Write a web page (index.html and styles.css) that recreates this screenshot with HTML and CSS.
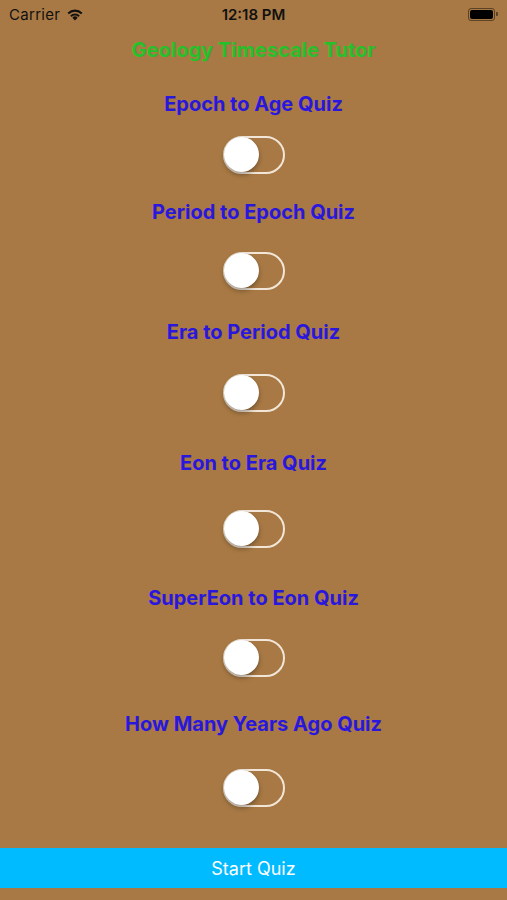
FILE: index.html
```html
<!DOCTYPE html>
<html lang="en">
<head>
  <meta charset="UTF-8">
  <title>Geology Timescale Tutor</title>
  <link rel="stylesheet" href="styles.css">
</head>
<body>
  <div class="status-bar">
    <div class="carrier">
      Carrier
      <svg class="wifi" width="18" height="13" viewBox="0 0 16 12">
        <path d="M8 11.5 L5.6 8.9 A3.4 3.4 0 0 1 10.4 8.9 Z" fill="#111"/>
        <path d="M3.6 6.9 A6.2 6.2 0 0 1 12.4 6.9 L11.1 8.3 A4.4 4.4 0 0 0 4.9 8.3 Z" fill="#111"/>
        <path d="M1.1 4.3 A9.8 9.8 0 0 1 14.9 4.3 L13.6 5.7 A7.9 7.9 0 0 0 2.4 5.7 Z" fill="#111"/>
      </svg>
    </div>
    <div class="clock">12:18 PM</div>
    <div class="battery">
      <div class="battery-body"><div class="battery-fill"></div></div>
      <div class="battery-tip"></div>
    </div>
  </div>

  <h1 class="app-title">Geology Timescale Tutor</h1>

  <div class="quiz-list">
    <div class="quiz-label">Epoch to Age Quiz</div>
    <div class="switch"><div class="knob"></div></div>
    <div class="quiz-label">Period to Epoch Quiz</div>
    <div class="switch"><div class="knob"></div></div>
    <div class="quiz-label">Era to Period Quiz</div>
    <div class="switch"><div class="knob"></div></div>
    <div class="quiz-label">Eon to Era Quiz</div>
    <div class="switch"><div class="knob"></div></div>
    <div class="quiz-label">SuperEon to Eon Quiz</div>
    <div class="switch"><div class="knob"></div></div>
    <div class="quiz-label">How Many Years Ago Quiz</div>
    <div class="switch"><div class="knob"></div></div>
  </div>

  <button class="start-btn" type="button">Start Quiz</button>
</body>
</html>
```

FILE: styles.css
```css
body {
  margin: 0;
  width: 507px;
  height: 900px;
  background-color: #a87944;
  font-family: Inter, "Noto Sans", sans-serif;
  overflow: hidden;
}

.status-bar {
  height: 28px;
  display: flex;
  align-items: center;
  justify-content: space-between;
  padding: 0 9px;
  position: relative;
  font-size: 15px;
  color: #111;
}

.carrier {
  display: flex;
  align-items: center;
  gap: 6px;
  letter-spacing: 0.3px;
}

.clock {
  position: absolute;
  left: 0;
  right: 0;
  text-align: center;
  font-weight: 600;
}

.battery {
  display: flex;
  align-items: center;
  gap: 1px;
}

.battery-body {
  width: 27px;
  height: 13px;
  border: 1px solid rgba(0, 0, 0, 0.45);
  border-radius: 3px;
  padding: 1px;
  box-sizing: border-box;
}

.battery-fill {
  width: 100%;
  height: 100%;
  background: #000;
  border-radius: 2px;
}

.battery-tip {
  width: 2px;
  height: 4px;
  background: rgba(0, 0, 0, 0.45);
  border-radius: 0 1px 1px 0;
}

.app-title {
  margin: 9px 0 0;
  text-align: center;
  font-size: 20px;
  line-height: 26px;
  font-weight: 700;
  color: #25c02a;
}

.quiz-list {
  display: flex;
  flex-direction: column;
  align-items: center;
}

.quiz-label {
  font-size: 20px;
  line-height: 26px;
  font-weight: 700;
  color: #2a17de;
}

.switch {
  width: 62px;
  height: 38px;
  box-sizing: border-box;
  border: 2.5px solid #f2e6d8;
  border-radius: 19px;
  position: relative;
}

.knob {
  position: absolute;
  left: -1px;
  top: -1px;
  width: 35px;
  height: 35px;
  border-radius: 50%;
  background: #fff;
  box-shadow: 0 3px 5px rgba(0, 0, 0, 0.3), 0 0 1px rgba(0, 0, 0, 0.2);
}

/* vertical rhythm copied from the layout */
.quiz-label:nth-child(1) { margin-top: 28px; }
.switch:nth-child(2) { margin-top: 19px; }
.quiz-label:nth-child(3) { margin-top: 25px; }
.switch:nth-child(4) { margin-top: 27px; }
.quiz-label:nth-child(5) { margin-top: 29px; }
.switch:nth-child(6) { margin-top: 29px; }
.quiz-label:nth-child(7) { margin-top: 38px; }
.switch:nth-child(8) { margin-top: 34px; }
.quiz-label:nth-child(9) { margin-top: 37px; }
.switch:nth-child(10) { margin-top: 28px; }
.quiz-label:nth-child(11) { margin-top: 34px; }
.switch:nth-child(12) { margin-top: 32px; }

.start-btn {
  display: block;
  width: 100%;
  height: 40px;
  margin-top: 41px;
  border: none;
  background-color: #00bbff;
  color: #fff;
  font-family: Inter, "Noto Sans", sans-serif;
  font-size: 18px;
  cursor: pointer;
}
```
